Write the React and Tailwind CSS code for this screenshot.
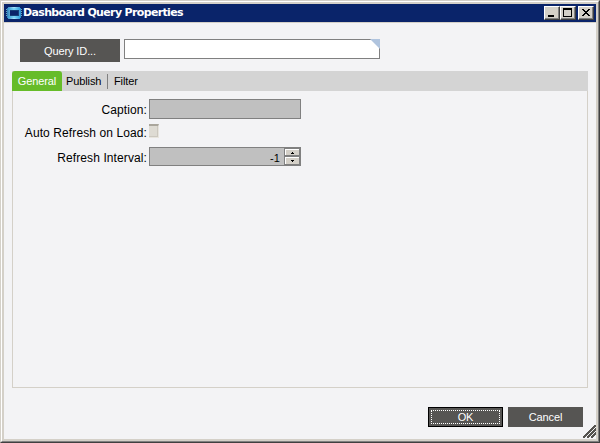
import React from 'react';

function AppIcon() {
  return (
    <svg width="16" height="12" viewBox="0 0 16 12" shapeRendering="crispEdges">
      <defs>
        <linearGradient id="chip" x1="0" x2="1" y1="0" y2="0">
          <stop offset="0" stopColor="#2d7eb8" />
          <stop offset=".5" stopColor="#a9e8ff" />
          <stop offset="1" stopColor="#238bcf" />
        </linearGradient>
      </defs>
      <path d="M0 2.5h16M0 4.5h16M0 6.5h16M0 8.5h16" stroke="#6aa9c4" />
      <path d="M2 0h12v1h1v10h-1v1H2v-1H1V1h1z" fill="url(#chip)" />
      <path d="M2 1h12v2H2zM2 9h12v2H2z" fill="#38b6ee" opacity=".4" />
      <path d="M4 3h9v6H4z" fill="#173f78" />
      <path d="M4 4h8v4H4z" fill="#0a246a" />
    </svg>
  );
}

function WindowButton({ children, className = '' }) {
  return (
    <button className={`h-[14px] w-4 border border-t-white border-l-white border-r-[#404040] border-b-[#404040] bg-[#d4d0c8] shadow-[inset_-1px_-1px_0_#808080] ${className}`}>
      <svg width="14" height="12" viewBox="0 0 14 12" shapeRendering="crispEdges" className="block">
        {children}
      </svg>
    </button>
  );
}

function TitleBar() {
  return (
    <header className="flex h-[18px] shrink-0 items-center bg-[#0a246a] pr-[2px] pl-[2px]">
      <AppIcon />
      <h1 className="ml-px flex-1 font-['DejaVu_Sans',sans-serif] text-[11px] leading-[18px] font-bold tracking-[-0.65px] whitespace-nowrap text-white">
        Dashboard Query Properties
      </h1>
      <WindowButton>
        <path d="M3 8h6v2H3z" />
      </WindowButton>
      <WindowButton>
        <path fillRule="evenodd" d="M2 1h9v9H2zM3 3v6h7V3z" />
      </WindowButton>
      <WindowButton className="ml-[2px]">
        <path d="M3 2h2v1h1v1h2V3h1V2h2v1h-1v1H9v1H8v1h1v1h1v1h1v1H9V8H8V7H6v1H5v1H3V8h1V7h1V6h1V5H5V4H4V3H3z" />
      </WindowButton>
    </header>
  );
}

function Label({ children }) {
  return <span className="block w-[134px] text-right whitespace-nowrap">{children}</span>;
}

function SpinButton({ up }) {
  return (
    <button className={`flex w-[14px] items-center justify-center border-t border-l border-white bg-[#d4d0c8] ${up ? 'h-[6px]' : 'h-[7px]'}`}>
      <svg width="3" height="2" viewBox="0 0 3 2" shapeRendering="crispEdges">
        <path d={up ? 'M1 0h1v1h1v1H0V1h1z' : 'M0 0h3v1H2v1H1V1H0z'} />
      </svg>
    </button>
  );
}

export default function App() {
  return (
    <div className="h-[443px] w-[600px] border border-t-[#d4d0c8] border-r-[#404040] border-b-[#404040] border-l-[#d4d0c8] bg-[#d4d0c8] font-['Liberation_Sans',Arial,sans-serif] text-[12px] leading-[16px] tracking-[0.1px] text-black">
      <div className="h-full border border-t-white border-r-[#808080] border-b-[#808080] border-l-white p-[2px]">
        <div className="flex h-full flex-col bg-[#f3f3f5]">
          <TitleBar />
          <div className="h-px shrink-0 bg-[#d4d0c8]" />
          <main className="flex flex-1 flex-col px-2 pt-4">
            <div className="flex h-8 items-start gap-1 pl-2">
              <button className="h-[23px] w-[100px] bg-[#565553] pt-px text-[11px] tracking-[-0.1px] text-white">Query ID...</button>
              <div className="flex h-5 w-64 justify-end border border-[#808080] bg-white">
                <svg width="10" height="10" viewBox="0 0 10 10" className="-mt-px -mr-px">
                  <path d="M0 0h10v10z" fill="#b0c4de" />
                </svg>
              </div>
            </div>
            <nav className="flex h-5 w-[576px] items-center bg-[#d4d4d4] text-[11px] tracking-[-0.1px]">
              <span className="h-5 w-[50px] rounded-t-[3px] bg-[#66bc29] text-center leading-[20px] text-white">General</span>
              <span className="w-[45px] pl-[4px] leading-[20px]">Publish</span>
              <span className="h-[15px] w-px bg-[#808080]" />
              <span className="pl-[6px] leading-[20px]">Filter</span>
            </nav>
            <section className="flex h-[297px] w-[576px] flex-col border border-t-0 border-[#d4d0c8] pt-2">
              <div className="flex h-[25px] items-start gap-[2px]">
                <div className="pt-[3px]"><Label>Caption:</Label></div>
                <div className="h-5 w-[152px] border border-[#808080] bg-[#c0c0c0]" />
              </div>
              <div className="flex h-[23px] items-start gap-[2px]">
                <div className="pt-px"><Label>Auto Refresh on Load:</Label></div>
                <div className="h-[14px] w-[10px] border border-t-2 border-l-0 border-t-[#aaa69c] border-r-[#e8e5de] border-b-[#e8e5de] bg-[#dedbd3] shadow-[inset_-1px_-1px_0_#ccc8bf]" />
              </div>
              <div className="flex h-[19px] items-start gap-[2px]">
                <div className="pt-[3px]"><Label>Refresh Interval:</Label></div>
                <div className="flex h-[19px] w-[152px] justify-end border border-[#808080] bg-[#c0c0c0]">
                  <span className="pt-[2px] pr-[4px] text-[11px]">-1</span>
                  <div className="flex w-[16px] flex-col gap-[2px] bg-[#808080] pt-px pl-px">
                    <SpinButton up />
                    <SpinButton />
                  </div>
                </div>
              </div>
            </section>
            <footer className="relative flex flex-1 items-start justify-end gap-[5px] pt-[19px] pr-[5px] text-[11px] tracking-[-0.1px]">
              <button className="h-5 w-[75px] border border-black bg-[#565553] p-[2px] text-white">
                <span className="block h-[14px] border border-dotted border-white leading-[13px]">OK</span>
              </button>
              <button className="h-5 w-[75px] bg-[#565553] text-white">Cancel</button>
              <svg className="absolute -right-2 bottom-px" width="13" height="13" viewBox="0 0 13 13" shapeRendering="crispEdges">
                <path d="M0 13 13 0M4 13 13 4M8 13 13 8" stroke="#55534f" strokeWidth="1.5" fill="none" />
              </svg>
            </footer>
          </main>
        </div>
      </div>
    </div>
  );
}
